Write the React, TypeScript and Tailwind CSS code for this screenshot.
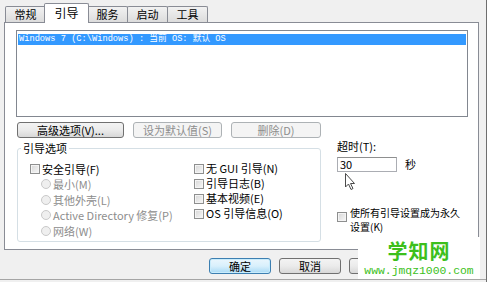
import React from "react";

const tabs = [
  { label: "常规", w: "w-[41px]" },
  { label: "引导", w: "w-[45px]", active: true },
  { label: "服务", w: "w-[41px]" },
  { label: "启动", w: "w-[41px]" },
  { label: "工具", w: "w-[41px]" },
];

const Checkbox = () => (
  <span className="inline-block w-[10px] h-[10px] shrink-0 border border-[#8e8f8f] bg-gradient-to-br from-[#d6d6d6] to-[#f8f8f8] shadow-[inset_0_0_0_1px_#f4f4f4]" />
);

const Radio = () => (
  <span className="inline-block w-[10px] h-[10px] shrink-0 rounded-full border border-[#c9c9c9] bg-[#efefef]" />
);

const Btn = ({
  children,
  w,
  disabled,
  primary,
}: {
  children?: React.ReactNode;
  w: string;
  disabled?: boolean;
  primary?: boolean;
}) => {
  let cls =
    "border-[#707070] bg-gradient-to-b from-[#f3f3f3] via-[#ebebeb] to-[#d8d8d8] text-black";
  if (disabled) cls = "border-[#adb2b5] bg-[#f4f4f4] text-[#8d8d8d]";
  if (primary)
    cls =
      "border-[#3c7fb1] bg-gradient-to-b from-[#eaf6fd] via-[#d9f0fc] to-[#a7d9f5] text-black shadow-[inset_0_0_0_1px_#c8ecfc]";
  return (
    <div
      className={`${w} h-[16px] rounded-[3px] border flex items-center justify-center text-[11px] leading-none ${cls}`}
    >
      {children}
    </div>
  );
};

export default function App() {
  return (
    <div className="relative w-[487px] h-[282px] overflow-hidden bg-[#f0f0f0] border-r border-[#6e6e6e] text-[11px] text-black font-['Noto_Sans_CJK_SC',sans-serif]">
      {/* tab strip */}
      <div className="flex items-end h-[22px] pl-[5px]">
        {tabs.map((t) =>
          t.active ? (
            <div
              key={t.label}
              className={`${t.w} -ml-[2px] -mr-[1px] -mb-px h-[20px] relative z-10 bg-white border border-b-0 border-[#898c95] rounded-t-[2px] flex justify-center pt-[1px] text-[12px] leading-[16px]`}
            >
              {t.label}
            </div>
          ) : (
            <div
              key={t.label}
              className={`${t.w} -ml-px first:ml-0 h-[16px] bg-gradient-to-b from-[#f2f2f2] to-[#dcdcdc] border border-b-0 border-[#898c95] rounded-t-[2px] flex justify-center text-[11px] leading-[15px]`}
            >
              {t.label}
            </div>
          )
        )}
      </div>

      {/* tab panel */}
      <div className="ml-[4px] w-[475px] h-[228px] bg-white border border-[#898c95]">
        {/* boot list */}
        <div className="ml-[11px] mt-[7px] w-[452px] h-[87px] border border-[#828790] pt-[3px] px-px">
          <div className="h-[11px] bg-[#3399ff] text-white text-[8.7px] leading-[11px] pl-px font-['Liberation_Mono','Noto_Sans_CJK_SC',monospace] whitespace-pre">
            Windows 7 (C:\Windows) : 当前 OS: 默认 OS
          </div>
        </div>

        {/* list buttons */}
        <div className="flex gap-[9px] ml-[12px] mt-[5px]">
          <Btn w="w-[107px]">高级选项(V)...</Btn>
          <Btn w="w-[89px]" disabled>
            设为默认值(S)
          </Btn>
          <Btn w="w-[90px]" disabled>
            删除(D)
          </Btn>
        </div>

        {/* options */}
        <div className="flex">
          <fieldset className="ml-[12px] mt-[3px] w-[304px] h-[101px] border border-[#d5dfe5] rounded-[3px]">
            <legend className="ml-[3px] px-[2px] leading-[14px]">引导选项</legend>
            <div className="flex pt-[6px] pl-[12px]">
              <div className="w-[164px] flex flex-col">
                <div className="h-[15.5px] flex items-center gap-[2px]">
                  <Checkbox />
                  <span>安全引导(F)</span>
                </div>
                {["最小(M)", "其他外壳(L)", "Active Directory 修复(P)", "网络(W)"].map(
                  (r) => (
                    <div
                      key={r}
                      className="h-[15.5px] flex items-center gap-[2px] pl-[11px] text-[#8d8d8d]"
                    >
                      <Radio />
                      <span>{r}</span>
                    </div>
                  )
                )}
              </div>
              <div className="flex flex-col">
                {["无 GUI 引导(N)", "引导日志(B)", "基本视频(E)", "OS 引导信息(O)"].map(
                  (c) => (
                    <div key={c} className="h-[15px] flex items-center gap-[2px]">
                      <Checkbox />
                      <span>{c}</span>
                    </div>
                  )
                )}
              </div>
            </div>
          </fieldset>

          <div className="ml-[16px] flex flex-col">
            <div className="leading-[14px] mt-[1px]">超时(T):</div>
            <div className="flex items-center mt-[3px]">
              <div className="w-[60px] h-[15px] border border-[#abadb3] border-t-[#8e8f8f] bg-white pl-[2px] leading-[13px]">
                30
              </div>
              <span className="ml-[8px]">秒</span>
            </div>
            <div className="flex mt-[33px] gap-[3px]">
              <span className="mt-[3px]">
                <Checkbox />
              </span>
              <div className="text-[10px] whitespace-nowrap">
                <div className="leading-[14px]">使所有引导设置成为永久</div>
                <div className="leading-[14px]">设置(K)</div>
              </div>
            </div>
          </div>
        </div>
      </div>

      {/* dialog buttons */}
      <div className="flex gap-[8px] ml-[209px] mt-[8px]">
        <Btn w="w-[62px]" primary>
          确定
        </Btn>
        <Btn w="w-[62px]">取消</Btn>
        <Btn w="w-[62px]" />
      </div>
      <div className="mt-[5px] h-px bg-[#a5a5a5]" />

      {/* mouse pointer */}
      <svg
        className="absolute left-[345px] top-[173px]"
        width="12"
        height="18"
        viewBox="0 0 12 18"
      >
        <path
          d="M0.5 0.5 L0.5 14 L3.5 11 L6 16.5 L8 15.5 L5.5 10.5 L9.5 10.5 Z"
          fill="#ffffff"
          stroke="#4a4a4a"
          strokeWidth="1"
        />
      </svg>

      {/* watermark */}
      <div className="absolute left-[358px] top-[237px] w-[122px] h-[42px] bg-white flex flex-col items-center">
        <div className="text-[20px] leading-[28px] font-bold text-[#3cbf1c] tracking-[1px]">
          学知网
        </div>
        <div className="text-[11.4px] leading-[13px] text-[#3cbf1c] font-['Liberation_Mono',monospace]">
          www.jmqz1000.com
        </div>
      </div>
    </div>
  );
}
